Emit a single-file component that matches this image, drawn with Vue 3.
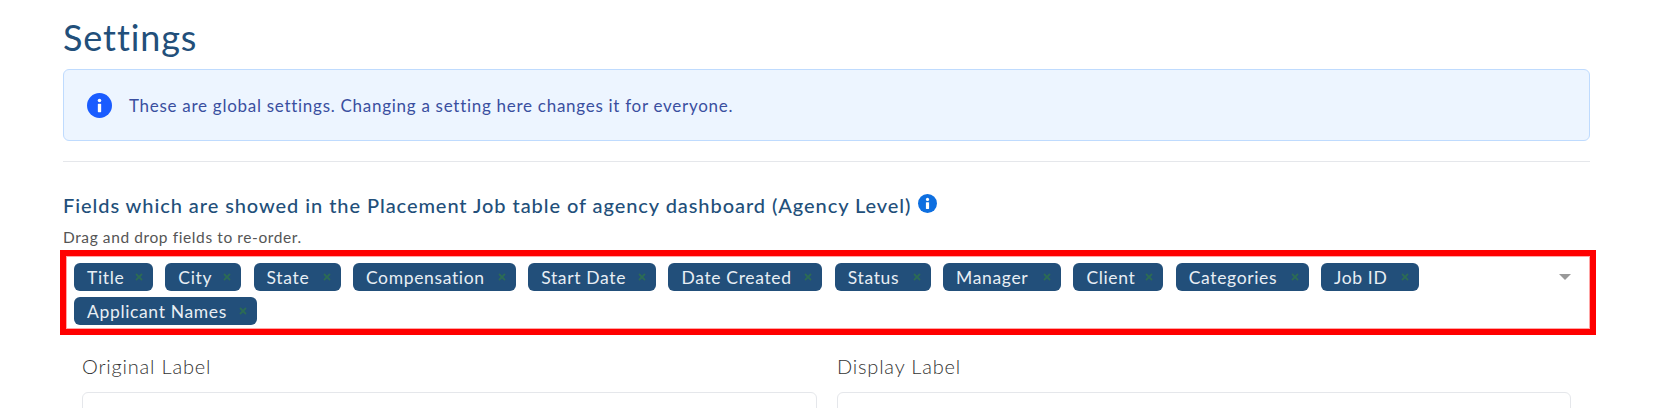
<template>
  <div class="settings-page">
    <h1>Settings</h1>

    <div class="alert">
      <svg class="alert-icon" viewBox="0 0 24 24">
        <circle cx="12" cy="12" r="12" fill="#1a5cff" />
        <circle cx="12" cy="7.2" r="1.7" fill="#fff" />
        <rect x="10.4" y="10.4" width="3.2" height="8" rx="0.6" fill="#fff" />
      </svg>
      <span>These are global settings. Changing a setting here changes it for everyone.</span>
    </div>

    <hr />

    <h2>
      Fields which are showed in the Placement Job table of agency dashboard (Agency Level)
      <svg class="help-icon" viewBox="0 0 24 24">
        <circle cx="12" cy="12" r="12" fill="#0e6fe0" />
        <circle cx="12" cy="6.8" r="2" fill="#fff" />
        <rect x="10" y="10.4" width="4" height="8.6" rx="0.6" fill="#fff" />
      </svg>
    </h2>
    <p class="hint">Drag and drop fields to re-order.</p>

    <div class="field-select">
      <div class="tags">
        <div v-for="field in fields" :key="field.name" class="tag" :style="{ width: field.width + 'px' }">
          <span>{{ field.name }}</span>
          <svg class="tag-remove" viewBox="0 0 8 8">
            <path d="M1 1L7 7M7 1L1 7" />
          </svg>
        </div>
      </div>
      <div class="arrow"></div>
    </div>

    <div class="label-grid">
      <div class="label-col">
        <label>Original Label</label>
        <div class="input"></div>
      </div>
      <div class="label-col">
        <label>Display Label</label>
        <div class="input"></div>
      </div>
    </div>
  </div>
</template>

<script setup>
const fields = [
  { name: "Title", width: 79 },
  { name: "City", width: 76 },
  { name: "State", width: 87 },
  { name: "Compensation", width: 163 },
  { name: "Start Date", width: 128 },
  { name: "Date Created", width: 154 },
  { name: "Status", width: 96 },
  { name: "Manager", width: 118 },
  { name: "Client", width: 90 },
  { name: "Categories", width: 133 },
  { name: "Job ID", width: 98 },
  { name: "Applicant Names", width: 183 },
];
</script>

<style>
html,
body {
  margin: 0;
  height: 408px;
  overflow: hidden;
  background: #fff;
}
</style>

<style scoped>
.settings-page {
  width: 1527px;
  margin-left: 63px;
  font-family: Lato, "Open Sans", sans-serif;
}

h1 {
  margin: 0;
  padding-top: 15px;
  height: 53px;
  box-sizing: border-box;
  font-size: 36px;
  line-height: 44px;
  font-weight: 400;
  letter-spacing: 0.9px;
  color: #224f7a;
  white-space: nowrap;
}

.alert {
  margin-top: 16px;
  height: 72px;
  box-sizing: border-box;
  display: flex;
  align-items: center;
  gap: 17px;
  padding-left: 23px;
  background: #edf5ff;
  border: 1px solid #bfdbfe;
  border-radius: 6px;
  font-size: 17px;
  font-weight: 400;
  letter-spacing: 0.72px;
  color: #3a4fa0;
}

.alert-icon {
  width: 25px;
  height: 25px;
}

hr {
  margin: 20px 0 0;
  border: 0;
  border-top: 1px solid #e5e7eb;
}

h2 {
  margin: 30px 0 0;
  height: 26px;
  display: flex;
  align-items: center;
  gap: 7px;
  font-size: 20px;
  line-height: 26px;
  font-weight: 500;
  letter-spacing: 0.93px;
  color: #224f7a;
  white-space: nowrap;
}

.help-icon {
  width: 19px;
  height: 19px;
  margin-top: -4px;
}

.hint {
  margin: 9px 0 0;
  font-size: 15.5px;
  line-height: 20px;
  font-weight: 400;
  letter-spacing: 0.6px;
  color: #555;
}

.field-select {
  margin: 3px -6px 0 -3px;
  height: 85px;
  box-sizing: border-box;
  display: flex;
  align-items: flex-start;
  justify-content: space-between;
  padding: 7px 19px 0 8px;
  border: 6px solid #ff0000;
  box-shadow: inset 0 0 0 1px rgba(255, 0, 0, 0.35);
}

.tags {
  display: flex;
  flex-wrap: wrap;
  gap: 6px 12.3px;
  width: 1400px;
}

.tag {
  height: 28px;
  box-sizing: border-box;
  display: flex;
  align-items: center;
  justify-content: space-between;
  padding: 0 10px 0 13px;
  background: #224f7a;
  border-radius: 6px;
  font-size: 17.5px;
  letter-spacing: 0.65px;
  color: #e8eef4;
  white-space: nowrap;
}

.tag-remove {
  width: 8px;
  height: 8px;
  fill: none;
  stroke: #2c6b55;
  stroke-width: 1.8;
}

.arrow {
  margin-top: 11px;
  width: 0;
  height: 0;
  border-left: 6px solid transparent;
  border-right: 6px solid transparent;
  border-top: 6px solid #999;
}

.label-grid {
  display: grid;
  grid-template-columns: 735px 734px;
  gap: 20px;
  height: 54px;
  overflow: hidden;
  margin: 19px 0 0 19px;
}

label {
  display: block;
  font-size: 20px;
  line-height: 24px;
  font-weight: 300;
  letter-spacing: 0.8px;
  color: #333;
}

.input {
  margin-top: 14px;
  height: 40px;
  box-sizing: border-box;
  border: 1px solid #e5e7eb;
  border-radius: 6px;
  background: #fff;
}
</style>
